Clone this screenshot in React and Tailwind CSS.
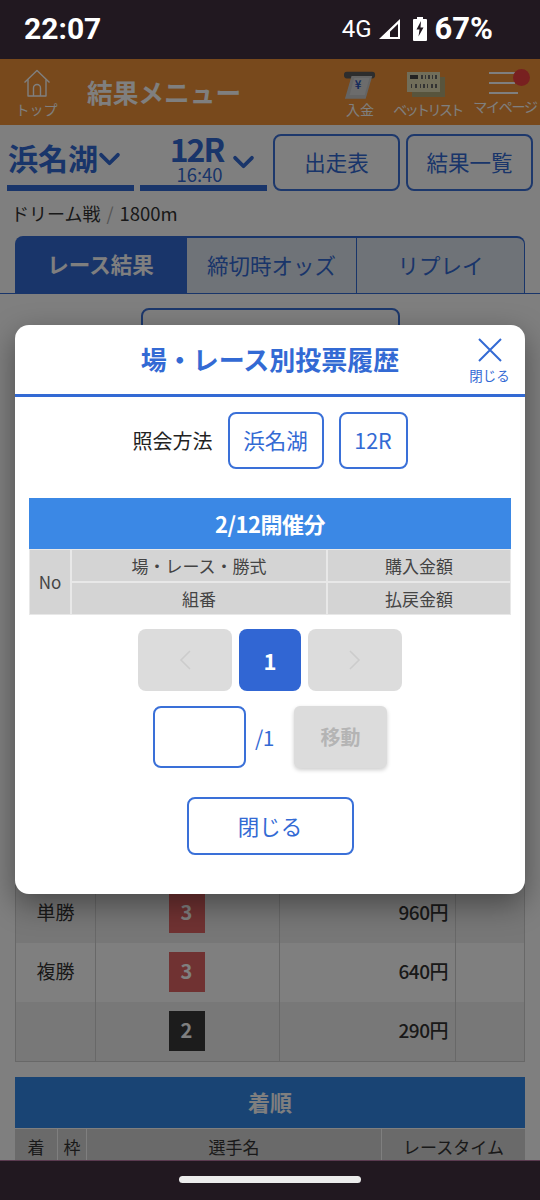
const font = { fontFamily: '"Noto Sans CJK JP", "Noto Sans", sans-serif' };

const Chevron = ({ className }) => (
  <svg viewBox="0 0 24 16" className={className} fill="none" stroke="currentColor" strokeWidth="4" strokeLinecap="round" strokeLinejoin="round">
    <path d="M3 3l9 9 9-9" />
  </svg>
);

const StatusBar = () => (
  <div className="relative z-20 h-[59px] shrink-0 bg-[#211820] text-white flex items-start">
    <div className="ml-6 mt-[9px] text-[30px] leading-[40px] font-bold" style={{ fontFamily: 'Roboto, sans-serif' }}>22:07</div>
    <div className="ml-auto mr-[47px] mt-[9px] flex items-center h-[40px]">
      <span className="text-[24px] font-normal" style={{ fontFamily: 'Roboto, sans-serif' }}>4G</span>
      <svg viewBox="0 0 22 22" className="w-[22px] h-[22px] ml-[7px]">
        <path d="M21 1V21H0Z M19 6L5.5 19H19Z" fill="white" fillRule="evenodd" />
        <path d="M11 11.5L4 19H11Z" fill="white" />
      </svg>
      <svg viewBox="0 0 14 24" className="w-[14px] h-[24px] ml-[12px]">
        <path d="M4 0h6v2h3a1 1 0 0 1 1 1v20a1 1 0 0 1-1 1H1a1 1 0 0 1-1-1V3a1 1 0 0 1 1-1h3z" fill="white" />
        <path d="M8 4L3.5 12.5H6.5L5.5 19.5L10.5 10.5H7.5Z" fill="#211820" />
      </svg>
      <span className="ml-[8px] text-[31px] font-bold" style={{ fontFamily: 'Roboto, sans-serif' }}>67%</span>
    </div>
  </div>
);

const Header = () => (
  <div className="h-[66px] shrink-0 bg-[#f09238] flex text-white">
    <div className="w-[74px] flex flex-col items-center pt-[10px]">
      <svg viewBox="0 0 28 28" className="w-[28px] h-[28px]" fill="none" stroke="currentColor" strokeWidth="1.4" strokeLinejoin="round">
        <path d="M1.5 13.5L14 1.5l12.5 12" />
        <path d="M5 10.5V27h18V10.5" />
        <path d="M10.5 27v-8a3.5 3.5 0 0 1 7 0v8" />
      </svg>
      <span className="text-[14px] leading-[18px] mt-[3px] -ml-[1px]">トップ</span>
    </div>
    <div className="ml-[13px] text-[25.7px] font-bold leading-[66px]">結果メニュー</div>
    <div className="ml-auto flex">
      <div className="w-[60px] flex flex-col items-center pt-[12px] -ml-[4px]">
        <svg viewBox="0 0 34 30" className="w-[32px] h-[29px]">
          <rect x="0" y="0.5" width="33" height="7" rx="3" fill="#5a5a5a" />
          <path d="M8 5h22l-7 24H1Z" fill="#c9c9c9" />
          <path d="M11 7h16l-5 18H6Z" fill="#d8d8d8" />
          <text x="15" y="19" textAnchor="middle" fontSize="12" fontWeight="700" fill="#2a55b8">¥</text>
        </svg>
        <span className="text-[14px] leading-[18px] mt-[0px]">入金</span>
      </div>
      <div className="w-[80px] flex flex-col items-center pt-[13px]">
        <svg viewBox="0 0 38 25" className="w-[38px] h-[25px] -ml-[8px]">
          <rect x="5" y="5" width="33" height="20" fill="#b0a878" />
          <rect x="0" y="0" width="33" height="20" fill="#e2dcb4" />
          <rect x="3" y="3" width="8" height="4" fill="#444" />
          <path d="M14 3h2v4h-2zM18 3h1v4h-1zM21 3h2v4h-2zM25 3h1v4h-1zM28 3h2v4h-2zM4 12h1v4H4zM8 12h2v4H8zM13 12h1v4h-1zM16 12h2v4h-2zM20 12h1v4h-1zM24 12h2v4h-2zM28 12h2v4h-2z" fill="#666" />
        </svg>
        <span className="text-[14px] leading-[18px] mt-[3px] -ml-[5px] tracking-[-2.6px] whitespace-nowrap">ベットリスト</span>
      </div>
      <div className="relative w-[70px] flex flex-col items-center pt-[13px]">
        <div className="w-[29px] self-start ml-[19px] flex flex-col gap-[8px]">
          <div className="h-[2px] bg-white w-[26px]"></div>
          <div className="h-[2px] bg-white w-[26px]"></div>
          <div className="h-[2px] bg-white"></div>
        </div>
        <span className="absolute top-[10px] left-[43px] w-[17px] h-[17px] rounded-full bg-[#f04040]"></span>
        <span className="text-[14px] leading-[18px] mt-[3px] tracking-[-1.2px] whitespace-nowrap">マイページ</span>
      </div>
    </div>
  </div>
);

const RaceSelect = () => (
  <div className="h-[66px] flex items-stretch pl-[7px] pr-[7px]">
    <div className="w-[127px] h-[66px] border-b-[6px] border-[#336ad4] text-[#336ad4] flex items-center pt-[4px] pl-[1px]">
      <span className="text-[30px] font-bold leading-none">浜名湖</span>
      <Chevron className="w-[23px] h-[15px] mt-[4px]" />
    </div>
    <div className="ml-[6px] w-[127px] h-[66px] border-b-[6px] border-[#336ad4] text-[#336ad4] relative flex flex-col items-center pl-[6px]">
      <span className="text-[32px] font-bold leading-[28px] mt-[9px] -ml-[20px] tracking-[-2px]">12R</span>
      <span className="text-[18.5px] leading-[19px] mt-[3px] -ml-[14px]">16:40</span>
      <Chevron className="absolute right-[12px] top-[30px] w-[23px] h-[15px]" />
    </div>
    <div className="ml-[6px] mt-[9px] w-[127px] h-[57px] border-2 border-[#3a70d8] rounded-[8px] text-[#336ad4] text-[21.5px] flex items-center justify-center">出走表</div>
    <div className="ml-[6px] mt-[9px] w-[127px] h-[57px] border-2 border-[#3a70d8] rounded-[8px] text-[#336ad4] text-[21.5px] flex items-center justify-center">結果一覧</div>
  </div>
);

const Tabs = () => (
  <div className="border-b border-[#336ad4] px-[15px] h-[58px]">
    <div className="flex h-[57px]">
      <div className="w-[171px] bg-[#336ad4] text-white font-bold text-[21.5px] rounded-tl-[8px] flex items-center justify-center">レース結果</div>
      <div className="w-[170px] bg-[#dfe6f0] border-t-2 border-l border-[#336ad4] text-[#336ad4] text-[21.5px] flex items-center justify-center">締切時オッズ</div>
      <div className="flex-1 bg-[#dfe6f0] border-t-2 border-x border-[#336ad4] rounded-tr-[8px] text-[#336ad4] text-[21.5px] flex items-center justify-center">リプレイ</div>
    </div>
  </div>
);

const payoutRows = [
  { label: '単勝', num: '3', color: 'bg-[#e06464]', price: '960円', stripe: 'bg-[#eeeeee]' },
  { label: '複勝', num: '3', color: 'bg-[#e06464]', price: '640円', stripe: 'bg-white' },
  { label: '', num: '2', color: 'bg-[#383838]', price: '290円', stripe: 'bg-[#f0f0f0]' },
];

const Payouts = () => (
  <div className="mx-[15px] border border-[#d0d0d0] text-[#333]">
    {payoutRows.map((r, i) => (
      <div key={i} className={`grid grid-cols-[80px_184px_176px_1fr] h-[59px] text-[19px] ${r.stripe}`}>
        <div className="border-r border-[#d0d0d0] flex items-center justify-center pb-[3px]">{r.label}</div>
        <div className="border-r border-[#d0d0d0] flex items-center justify-center -ml-[2px] pb-[1px]">
          <div className={`w-[36px] h-[40px] ${r.color} text-white font-semibold text-[20px] flex items-center justify-center pb-[2px]`}>{r.num}</div>
        </div>
        <div className="border-r border-[#d0d0d0] flex items-center justify-end pr-[7px] pb-[3px] font-medium text-[19px] tracking-[-0.5px]">{r.price}</div>
        <div></div>
      </div>
    ))}
  </div>
);

const Ranking = () => (
  <div className="mx-[15px] mt-[15px]">
    <div className="h-[51px] bg-[#3388e8] text-white font-bold text-[22px] flex items-center justify-center pb-[3px]">着順</div>
    <div className="grid grid-cols-[42px_28px_294px_1fr] h-[40px] text-[17px] text-[#333] gap-x-[1px] mt-[1px]">
      <div className="bg-[#d4d4d4] flex items-center justify-center pb-[4px]">着</div>
      <div className="bg-[#d4d4d4] flex items-center justify-center pb-[4px]">枠</div>
      <div className="bg-[#d4d4d4] flex items-center justify-center pb-[4px]">選手名</div>
      <div className="bg-[#d4d4d4] flex items-center justify-center pb-[4px]">レースタイム</div>
    </div>
  </div>
);

const Modal = () => (
  <div className="w-[510px] h-[569px] bg-white rounded-[14px] shadow-[0_10px_30px_rgba(0,0,0,0.4)] flex flex-col">
    <div className="relative h-[72px] shrink-0 border-b-[3px] border-[#336ad4] flex items-center justify-center">
      <h2 className="text-[26px] font-bold text-[#336ad4] leading-none -mt-[2px]">場・レース別投票履歴</h2>
      <button className="absolute right-[15px] top-[13px] w-[41px] flex flex-col items-center text-[#336ad4]">
        <svg viewBox="0 0 24 24" className="w-[24px] h-[24px]" fill="none" stroke="currentColor" strokeWidth="2">
          <path d="M1 1l22 22M23 1L1 23" />
        </svg>
        <span className="text-[13.5px] leading-[18px] mt-[4px] whitespace-nowrap">閉じる</span>
      </button>
    </div>
    <div className="flex items-center justify-center mt-[15px] h-[57px]">
      <span className="text-[20px] text-[#222] mr-[15px]">照会方法</span>
      <div className="w-[96px] h-[57px] border-2 border-[#3a70d8] rounded-[8px] text-[21.5px] text-[#336ad4] flex items-center justify-center">浜名湖</div>
      <div className="ml-[15px] w-[69px] h-[57px] border-2 border-[#3a70d8] rounded-[8px] text-[21.5px] text-[#336ad4] flex items-center justify-center">12R</div>
    </div>
    <div className="mx-[14px] mt-[29px]">
      <div className="h-[51px] bg-[#3b88e5] text-white font-bold text-[22px] tracking-[-0.5px] flex items-center justify-center">2/12開催分</div>
      <div className="grid grid-cols-[40px_254px_1fr] grid-rows-[31px_31px] gap-[2px] bg-[#e8e8e8] p-[1px] text-[17px] text-[#444]">
        <div className="row-span-2 bg-[#d4d4d4] flex items-center justify-center">No</div>
        <div className="bg-[#d4d4d4] flex items-center justify-center">場・レース・勝式</div>
        <div className="bg-[#d4d4d4] flex items-center justify-center">購入金額</div>
        <div className="bg-[#d4d4d4] flex items-center justify-center">組番</div>
        <div className="bg-[#d4d4d4] flex items-center justify-center">払戻金額</div>
      </div>
    </div>
    <div className="flex justify-center gap-[7px] mt-[14px]">
      <div className="w-[94px] h-[62px] bg-[#dcdcdc] rounded-[8px] flex items-center justify-center text-[#cccccc]">
        <svg viewBox="0 0 12 20" className="w-[12px] h-[20px]" fill="none" stroke="currentColor" strokeWidth="1.5"><path d="M11 1L2 10l9 9" /></svg>
      </div>
      <div className="w-[62px] h-[62px] bg-[#3166d3] rounded-[8px] text-white font-semibold text-[22px] flex items-center justify-center">1</div>
      <div className="w-[94px] h-[62px] bg-[#dcdcdc] rounded-[8px] flex items-center justify-center text-[#cccccc]">
        <svg viewBox="0 0 12 20" className="w-[12px] h-[20px]" fill="none" stroke="currentColor" strokeWidth="1.5"><path d="M1 1l9 9-9 9" /></svg>
      </div>
    </div>
    <div className="flex mt-[15px] ml-[138px]">
      <input className="w-[93px] h-[62px] border-2 border-[#3a70d8] rounded-[8px] bg-white outline-none" />
      <span className="ml-[9px] text-[21px] text-[#336ad4] self-center mt-[2px] tracking-[-0.5px]">/1</span>
      <div className="ml-[20px] w-[93px] h-[62px] bg-[#dcdcdc] rounded-[6px] shadow-[0_2px_4px_rgba(0,0,0,0.2)] text-[#b4b4b4] font-bold text-[20px] flex items-center justify-center">移動</div>
    </div>
    <div className="flex justify-center mt-[29px]">
      <button className="w-[167px] h-[58px] border-2 border-[#3a70d8] rounded-[8px] text-[21.5px] text-[#336ad4]">閉じる</button>
    </div>
  </div>
);

export default function App() {
  return (
    <div className="relative w-[540px] h-[1200px] overflow-hidden bg-white flex flex-col" style={font}>
      <StatusBar />
      <Header />
      <div className="flex-1 min-h-0 overflow-hidden">
        <RaceSelect />
        <div className="h-[45px] pl-[11px] flex items-center text-[18px] text-[#333]">
          <span>ドリーム戦</span>
          <span className="mx-[6px] text-[#aaa]">/</span>
          <span className="text-[18.5px]">1800m</span>
        </div>
        <Tabs />
        <div className="mt-[14px] mx-auto w-[259px] h-[52px] border-2 border-[#3a70d8] rounded-[8px]"></div>
        <div className="mt-[523px]">
          <Payouts />
          <Ranking />
        </div>
      </div>
      <div className="relative z-20 h-[40px] shrink-0 bg-[#211820] border-t border-[#5a3a50] flex justify-center pt-[15px]">
        <div className="w-[182px] h-[7px] rounded-full bg-[#ececec]"></div>
      </div>
      <div className="absolute left-0 right-0 top-[59px] bottom-[40px] bg-black/50 z-10 flex items-center justify-center">
        <Modal />
      </div>
    </div>
  );
}
